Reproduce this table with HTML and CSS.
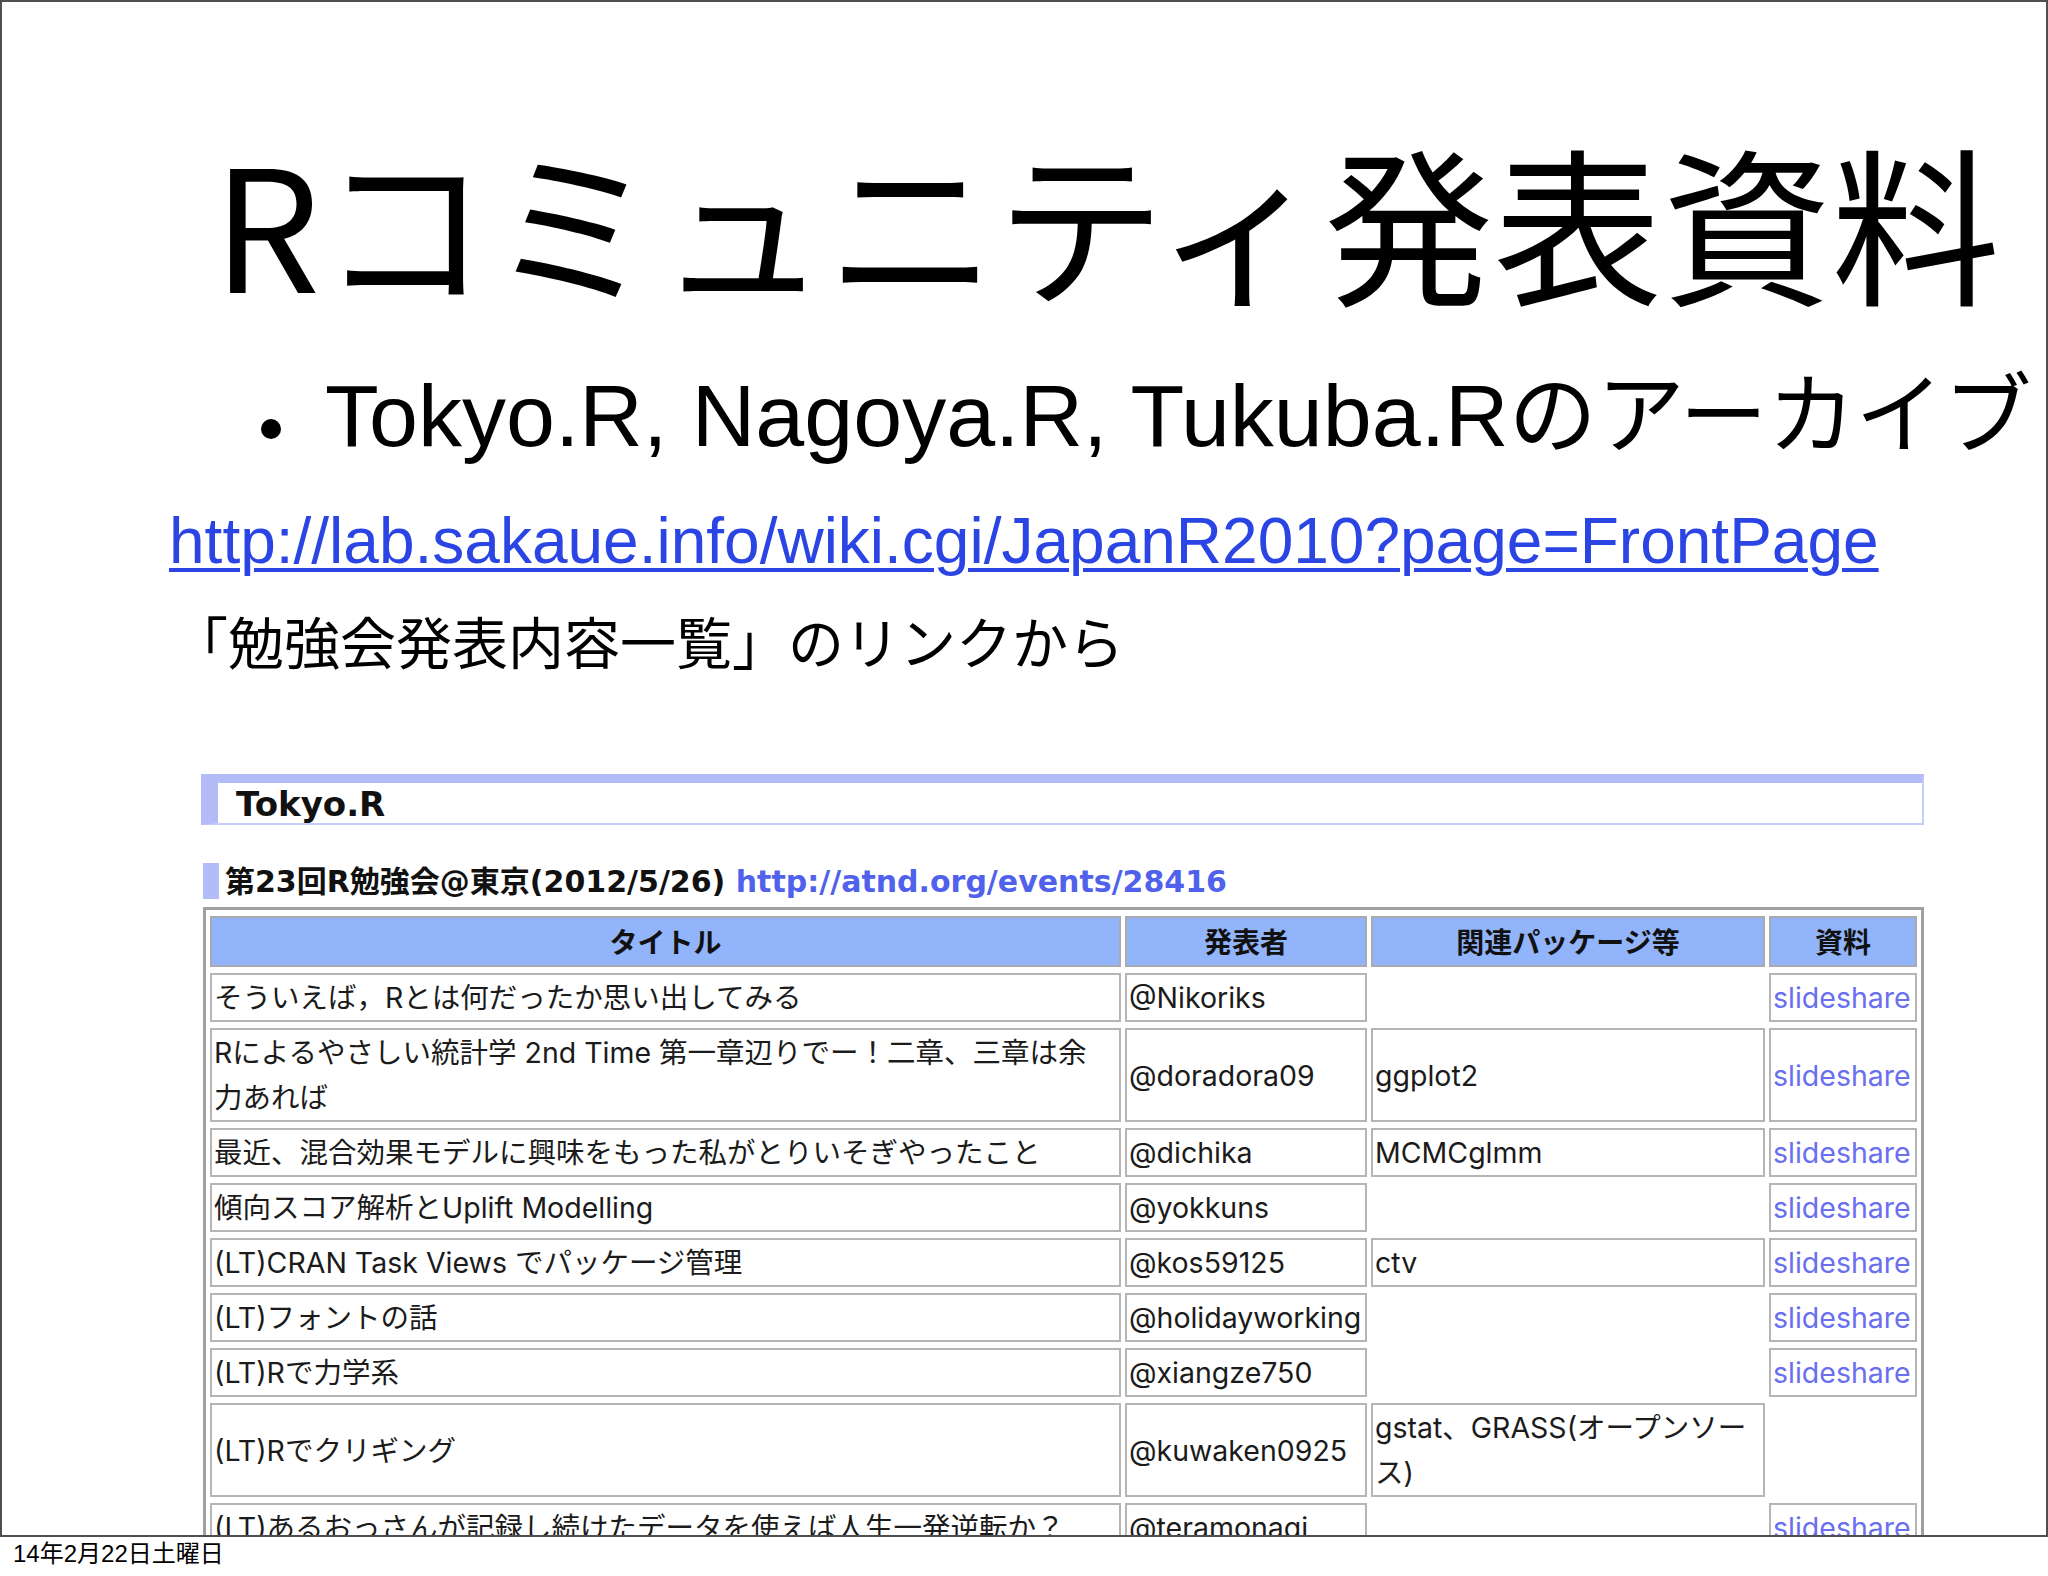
FILE: index.html
```html
<!DOCTYPE html>
<html lang="ja">
<head>
<meta charset="utf-8">
<title>Rコミュニティ発表資料</title>
<link rel="stylesheet" href="styles.css">
</head>
<body>
<div class="slide">
  <h1 class="title">Rコミュニティ発表資料</h1>
  <ul class="bullets">
    <li><span class="dot"></span><span>Tokyo.R, Nagoya.R, Tukuba.Rのアーカイブ</span></li>
  </ul>
  <p class="url"><a href="#">http://lab.sakaue.info/wiki.cgi/JapanR2010?page=FrontPage</a></p>
  <p class="note">「勉強会発表内容一覧」のリンクから</p>
  <div class="shot">
    <div class="wiki-h2">Tokyo.R</div>
    <div class="wiki-h3">第23回R勉強会@東京(2012/5/26) <a href="#">http://atnd.org/events/28416</a></div>
    <table class="talks">
      <thead>
        <tr>
          <th class="c-title">タイトル</th>
          <th class="c-who">発表者</th>
          <th class="c-pkg">関連パッケージ等</th>
          <th class="c-doc">資料</th>
        </tr>
      </thead>
      <tbody>
        <tr>
          <td>そういえば，Rとは何だったか思い出してみる</td>
          <td>@Nikoriks</td>
          <td></td>
          <td class="link"><a href="#">slideshare</a></td>
        </tr>
        <tr>
          <td>Rによるやさしい統計学 2nd Time 第一章辺りでー！二章、三章は余<br>力あれば</td>
          <td>@doradora09</td>
          <td>ggplot2</td>
          <td class="link"><a href="#">slideshare</a></td>
        </tr>
        <tr>
          <td>最近、混合効果モデルに興味をもった私がとりいそぎやったこと</td>
          <td>@dichika</td>
          <td>MCMCglmm</td>
          <td class="link"><a href="#">slideshare</a></td>
        </tr>
        <tr>
          <td>傾向スコア解析とUplift Modelling</td>
          <td>@yokkuns</td>
          <td></td>
          <td class="link"><a href="#">slideshare</a></td>
        </tr>
        <tr>
          <td>(LT)CRAN Task Views でパッケージ管理</td>
          <td>@kos59125</td>
          <td>ctv</td>
          <td class="link"><a href="#">slideshare</a></td>
        </tr>
        <tr>
          <td>(LT)フォントの話</td>
          <td>@holidayworking</td>
          <td></td>
          <td class="link"><a href="#">slideshare</a></td>
        </tr>
        <tr>
          <td>(LT)Rで力学系</td>
          <td>@xiangze750</td>
          <td></td>
          <td class="link"><a href="#">slideshare</a></td>
        </tr>
        <tr>
          <td>(LT)Rでクリギング</td>
          <td>@kuwaken0925</td>
          <td>gstat、GRASS(オープンソー<br>ス)</td>
          <td></td>
        </tr>
        <tr>
          <td>(LT)あるおっさんが記録し続けたデータを使えば人生一発逆転か？</td>
          <td>@teramonagi</td>
          <td></td>
          <td class="link"><a href="#">slideshare</a></td>
        </tr>
      </tbody>
    </table>
  </div>
</div>
<div class="date">14年2月22日土曜日</div>
</body>
</html>
```

FILE: styles.css
```css
* { box-sizing: border-box; }

html, body {
  margin: 0;
  padding: 0;
  background: #ffffff;
}

body {
  font-family: "Liberation Sans", "Noto Sans CJK JP", sans-serif;
  color: #000000;
}

.slide {
  width: 2048px;
  height: 1537px;
  border: 2px solid #4f4f4f;
  overflow: hidden;
  padding-top: 134px;
}

.title {
  margin: 0 0 0 211px;
  font-family: "Noto Sans CJK JP", sans-serif;
  font-weight: 400;
  font-size: 169px;
  line-height: 168px;
  white-space: nowrap;
}

.bullets {
  list-style: none;
  margin: 62px 0 0;
  padding: 0 0 0 259px;
}

.bullets li {
  font-size: 88px;
  line-height: 100px;
  white-space: nowrap;
}

.dot {
  display: inline-block;
  width: 20px;
  height: 20px;
  border-radius: 50%;
  background: #000000;
  vertical-align: 7px;
  margin-right: 44px;
}

.url {
  margin: 35px 0 0 167px;
  font-size: 64px;
  line-height: 80px;
  white-space: nowrap;
}

.url a {
  color: #2b44e4;
  text-decoration: underline;
  text-decoration-thickness: 4px;
  text-underline-offset: 5px;
}

.note {
  margin: 24px 0 0 170px;
  font-family: "Noto Sans CJK JP", sans-serif;
  font-size: 56px;
  line-height: 70px;
  white-space: nowrap;
}

.shot {
  margin: 99px 0 0 199px;
  width: 1723px;
  font-family: Inter, "Noto Sans CJK JP", sans-serif;
  color: #1b1b1b;
}

.wiki-h2 {
  height: 51px;
  border-style: solid;
  border-width: 9px 2px 2px 17px;
  border-color: #b3bcf7 #c6cdfa #c6cdfa #b3bcf7;
  padding: 3px 0 0 18px;
  font-family: "DejaVu Sans", sans-serif;
  font-weight: bold;
  font-size: 34px;
  line-height: 37px;
  color: #111111;
}

.wiki-h3 {
  margin: 38px 0 0 2px;
  height: 36px;
  border-left: 16px solid #b3bcf7;
  padding: 2px 0 0 6px;
  font-family: "DejaVu Sans", "Noto Sans CJK JP", sans-serif;
  font-weight: bold;
  font-size: 30px;
  line-height: 34px;
  white-space: nowrap;
  color: #111111;
}

.wiki-h3 a {
  color: #5062ec;
  text-decoration: none;
}

.talks {
  margin: 8px 0 0 2px;
  width: 1721px;
  table-layout: fixed;
  border-collapse: separate;
  border-spacing: 4px 6px;
  border: 3px solid #a0a0a0;
  empty-cells: hide;
  font-size: 28.5px;
}

.talks th {
  background: #92b4fa;
  border: 2px solid #a9a9b0;
  font-family: "Noto Sans CJK JP", sans-serif;
  font-weight: bold;
  font-size: 28px;
  line-height: 47px;
  padding: 0;
  text-align: center;
  color: #111111;
}

.c-title { width: 911px; }
.c-who { width: 242px; }
.c-pkg { width: 394px; }
.c-doc { width: 148px; }

.talks td {
  border: 2px solid #b5b5b5;
  padding: 0 2px;
  line-height: 45px;
  vertical-align: middle;
  text-align: left;
  overflow: hidden;
}

.talks td.link {
  white-space: nowrap;
}

.talks td.link a {
  color: #6a6ff0;
  text-decoration: none;
}

.date {
  margin: 2px 0 0;
  padding-left: 13px;
  font-size: 24px;
  line-height: 30px;
  white-space: nowrap;
}
```
